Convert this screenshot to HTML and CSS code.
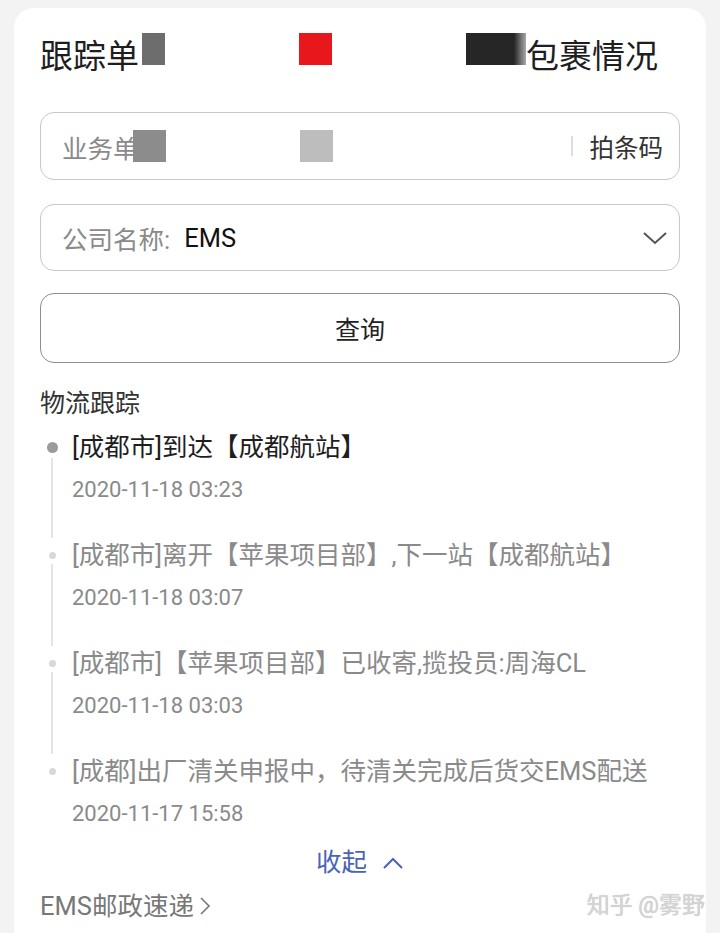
FILE: index.html
```html
<!DOCTYPE html>
<html>
	<head>
		<meta content="text/html;charset=utf-8" http-equiv="Content-Type">
		<meta name="viewport" content="initial-scale=1, user-scalable=no">
		<link rel="stylesheet" href="styles.css">
	</head>
	<body>
		<div class="card">
			<h1 class="title">
				<span>跟踪单</span>
				<span class="mask mask-grey"></span>
				<span class="mask mask-red"></span>
				<span class="mask mask-black"></span>
				<span>包裹情况</span>
			</h1>

			<div class="field">
				<span class="placeholder">业务单</span>
				<span class="mask-in mask-mid"></span>
				<span class="mask-in mask-light"></span>
				<span class="grow"></span>
				<span class="sep"></span>
				<span class="scan">拍条码</span>
			</div>

			<div class="field">
				<span class="label">公司名称:</span>
				<span class="value">EMS</span>
				<span class="grow"></span>
				<svg class="chev" width="26" height="16" viewBox="0 0 26 16">
					<polyline points="2,3 13,13 24,3" fill="none" stroke="#555" stroke-width="2"/>
				</svg>
			</div>

			<button class="query">查询</button>

			<h2 class="section">物流跟踪</h2>

			<ul class="track">
				<li class="step step-current">
					<div class="marker"><i class="dot"></i><i class="line"></i></div>
					<div>
						<p class="what">[成都市]到达【成都航站】</p>
						<p class="when">2020-11-18 03:23</p>
					</div>
				</li>
				<li class="step">
					<div class="marker"><i class="dot"></i><i class="line"></i></div>
					<div>
						<p class="what">[成都市]离开【苹果项目部】,下一站【成都航站】</p>
						<p class="when">2020-11-18 03:07</p>
					</div>
				</li>
				<li class="step">
					<div class="marker"><i class="dot"></i><i class="line"></i></div>
					<div>
						<p class="what">[成都市]【苹果项目部】已收寄,揽投员:周海CL</p>
						<p class="when">2020-11-18 03:03</p>
					</div>
				</li>
				<li class="step step-last">
					<div class="marker"><i class="dot"></i></div>
					<div>
						<p class="what">[成都]出厂清关申报中，待清关完成后货交EMS配送</p>
						<p class="when">2020-11-17 15:58</p>
					</div>
				</li>
			</ul>

			<div class="fold">
				<span>收起</span>
				<svg width="22" height="14" viewBox="0 0 22 14">
					<polyline points="2,12 11,3 20,12" fill="none" stroke="#4a63b8" stroke-width="2"/>
				</svg>
			</div>

			<div class="footer">
				<a class="carrier" href="#">EMS邮政速递
					<svg width="12" height="22" viewBox="0 0 12 22">
						<polyline points="2,3 10,11 2,19" fill="none" stroke="#777" stroke-width="1.6"/>
					</svg>
				</a>
				<span class="mark">知乎 @雾野</span>
			</div>
		</div>
	</body>
</html>
```

FILE: styles.css
```css
* {
	box-sizing: border-box;
}
body {
	margin: 0;
	background: #f3f3f3;
	font-family: Roboto, "Noto Sans CJK SC", sans-serif;
	color: #222;
}
.card {
	margin: 8px 14px 0;
	padding: 29px 26px 0;
	min-height: 940px;
	background: #fff;
	border-radius: 20px 20px 0 0;
}
.title {
	display: flex;
	align-items: flex-start;
	margin: 0 0 35px;
	font-size: 33px;
	font-weight: normal;
	line-height: 40px;
	color: #1e1e1e;
}
.mask {
	display: inline-block;
	height: 32px;
	margin-top: -4px;
}
.mask-grey {
	width: 23px;
	margin-left: 3px;
	background: #6d6d6d;
}
.mask-red {
	width: 33px;
	margin-left: 134px;
	background: #e8171b;
}
.mask-black {
	width: 60px;
	margin-left: 134px;
	background: linear-gradient(to right, #262626 80%, rgba(38, 38, 38, 0.4));
}

.field {
	display: flex;
	align-items: center;
	height: 68px;
	margin-bottom: 24px;
	padding: 0 11px 0 21px;
	border: 1.5px solid #c8c8c8;
	border-radius: 14px;
	font-size: 25.5px;
}
.field + .field {
	height: 67px;
	margin-bottom: 22px;
}
.placeholder, .label {
	color: #8a8a8a;
}
.label {
	margin-right: 14px;
}
.value {
	color: #111;
}
.mask-in {
	display: inline-block;
	width: 33px;
	height: 32px;
}
.mask-mid {
	margin-left: -6px;
	background: #8c8c8c;
}
.mask-light {
	margin-left: 134px;
	background: #bdbdbd;
}
.grow {
	flex: 1;
}
.sep {
	width: 2px;
	height: 20px;
	margin-right: 17px;
	background: #ddd;
}
.scan {
	margin-right: 5px;
	font-size: 24.5px;
	color: #333;
}

.query {
	display: block;
	width: 100%;
	height: 70px;
	margin: 0 0 26px;
	border: 1.5px solid #8e8e8e;
	border-radius: 14px;
	background: #fff;
	font-family: inherit;
	font-size: 25px;
	color: #222;
}

.section {
	margin: 0 0 13px;
	font-size: 25px;
	font-weight: normal;
	line-height: 30px;
	color: #333;
}

.track {
	list-style: none;
	margin: 0;
	padding: 0;
}
.step {
	display: grid;
	grid-template-columns: 24px 1fr;
	column-gap: 8px;
	padding-bottom: 36px;
}
.step-last {
	padding-bottom: 19px;
}
.marker {
	display: flex;
	flex-direction: column;
	align-items: center;
	margin-bottom: -34px;
}
.dot {
	width: 7px;
	height: 7px;
	margin-top: 12px;
	border-radius: 50%;
	background: #d8d8d8;
}
.step-current .dot {
	width: 11px;
	height: 11px;
	margin-top: 10px;
	background: #9b9b9b;
}
.line {
	flex: 1;
	width: 2px;
	margin-top: 5px;
	background: #e4e4e4;
}
.what {
	margin: 0 0 14px;
	font-size: 25.5px;
	line-height: 30px;
	color: #8a8a8a;
	white-space: nowrap;
}
.step-current .what {
	color: #1e1e1e;
}
.when {
	margin: 0;
	font-size: 22px;
	line-height: 28px;
	color: #8a8a8a;
}

.fold {
	display: flex;
	justify-content: center;
	align-items: center;
	gap: 15px;
	font-size: 25.5px;
	line-height: 30px;
	color: #4a63b8;
}
.fold svg {
	margin-top: 1px;
}

.footer {
	display: flex;
	justify-content: space-between;
	align-items: center;
	margin-top: 14px;
	line-height: 30px;
}
.carrier {
	display: flex;
	align-items: center;
	gap: 5px;
	font-size: 25.5px;
	color: #777;
	text-decoration: none;
}
.mark {
	margin-right: -25px;
	font-size: 23px;
	color: #d4d4d4;
	text-shadow: 0 0 1px #bbb;
}
```
